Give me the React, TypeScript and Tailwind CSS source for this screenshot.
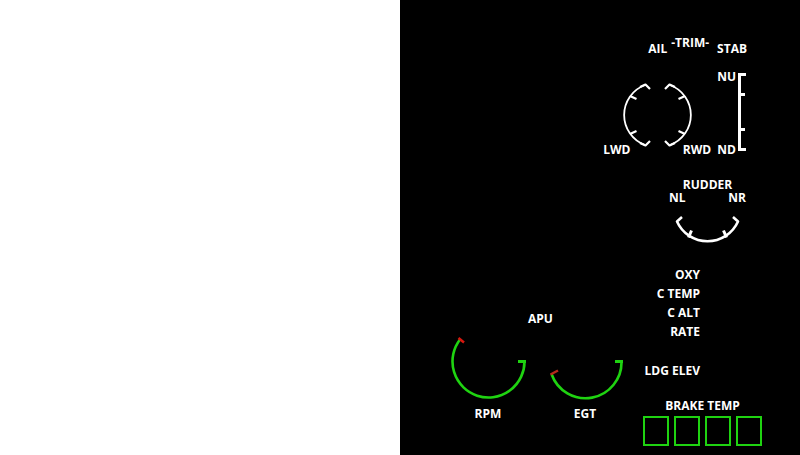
import type { ReactNode } from "react";

const GREEN = "#1fd311";

function Label({ children, className = "" }: { children: ReactNode; className?: string }) {
  return <span className={`block whitespace-nowrap ${className}`}>{children}</span>;
}

function AileronDial() {
  return (
    <svg width="69" height="68" viewBox="0 0 69 68" fill="none" stroke="white" strokeLinejoin="round" role="img" aria-label="Aileron trim">
      <g strokeWidth="1.8">
        <path d="M22 4A32 32 0 0 0 22 64" />
        <path d="M47 4A32 32 0 0 1 47 64" />
      </g>
      <path
        strokeWidth="2.2"
        d="M17 6L22.500 3.500L27 8M52 6L46.500 3.500L42 8M17 62L22.500 64.500L27 60M52 62L46.500 64.500L42 60M7 15L13.500 18M62 15L55.500 18M7 53L13.500 50M62 53L55.500 50"
      />
    </svg>
  );
}

function StabScale() {
  return (
    <svg width="9" height="80" viewBox="0 0 9 80" fill="none" stroke="white" strokeWidth="3" role="img" aria-label="Stabilizer trim">
      <path d="M8 2.500H1.500V77.500H8M1 22.500H7M1 57.500H7" />
    </svg>
  );
}

function RudderDial() {
  return (
    <svg width="66" height="31" viewBox="0 0 66 31" fill="none" stroke="white" strokeLinejoin="round" role="img" aria-label="Rudder trim">
      <path strokeWidth="2.600" d="M7 3L2 7.500A33.400 33.400 0 0 0 63 7.500L58 3" />
      <path strokeWidth="3" d="M13.500 23.500L16.500 16.500M51.500 23.500L48.500 16.500" />
    </svg>
  );
}

function Gauge({ name, arc, limit, limitColor }: { name: string; arc: string; limit: string; limitColor: string }) {
  return (
    <figure className="flex flex-col items-center gap-[5px]">
      <svg width="76" height="68" viewBox="0 0 76 68" fill="none" role="img" aria-label={name}>
        <path d={arc} stroke={GREEN} strokeWidth="2.600" />
        <path d="M68 28.500H76" stroke={GREEN} strokeWidth="3" />
        <path d={limit} stroke={limitColor} strokeWidth="2.500" />
      </svg>
      <figcaption>{name}</figcaption>
    </figure>
  );
}

export default function App() {
  return (
    <main className="flex min-h-screen bg-white font-['Open_Sans',sans-serif] text-[12px] leading-4 font-bold text-white">
      <div className="flex-1" />
      <section className="flex flex-1 flex-col bg-black pt-[35px]">
        <header className="flex items-start justify-end gap-1 pr-[53px]">
          <Label className="pt-1.5">AIL</Label>
          <Label>-TRIM-</Label>
          <Label className="pt-1.5 pl-1">STAB</Label>
        </header>

        <div className="mt-3 flex justify-end pr-[53px]">
          <div className="mr-1.5 flex w-[108px] flex-col items-center pt-3">
            <AileronDial />
            <div className="-mt-[7px] flex w-full justify-between">
              <Label>LWD</Label>
              <Label>RWD</Label>
            </div>
          </div>
          <div className="mr-0.5 flex flex-col justify-between">
            <Label>NU</Label>
            <Label>ND</Label>
          </div>
          <div className="pt-[3px]">
            <StabScale />
          </div>
        </div>

        <div className="mt-5 mr-[54px] flex w-[77px] flex-col items-center self-end leading-[13px]">
          <Label>RUDDER</Label>
          <div className="flex w-full justify-between">
            <Label>NL</Label>
            <Label>NR</Label>
          </div>
          <div className="mt-2.5">
            <RudderDial />
          </div>
        </div>

        <div className="mt-5 flex justify-between pr-[38px] pl-[50px]">
          <div className="flex flex-col items-center pt-[46px]">
            <Label className="pl-2">APU</Label>
            <div className="mt-1.5 flex gap-[21px]">
              <Gauge name="RPM" arc="M10 6.500A36 36 0 1 0 74.500 28" limit="M8.500 5L14 9.500" limitColor="#d8170f" />
              <Gauge name="EGT" arc="M4.500 41A36 36 0 0 0 74.500 28" limit="M3.500 41.500L11 37.500" limitColor="#b82a1c" />
            </div>
          </div>

          <div className="w-[119px]">
            <div className="flex flex-col items-end pr-[62px] leading-[19px]">
              <Label>OXY</Label>
              <Label>C TEMP</Label>
              <Label>C ALT</Label>
              <Label>RATE</Label>
              <Label className="mt-5">LDG ELEV</Label>
            </div>
            <Label className="mt-[18px] text-center">BRAKE TEMP</Label>
            <div className="mt-0.5 flex justify-between">
              {[1, 2, 3, 4].map((wheel) => (
                <div key={wheel} className="h-[30px] w-[26px] border-2 border-[#1fd311]" />
              ))}
            </div>
          </div>
        </div>
      </section>
    </main>
  );
}
